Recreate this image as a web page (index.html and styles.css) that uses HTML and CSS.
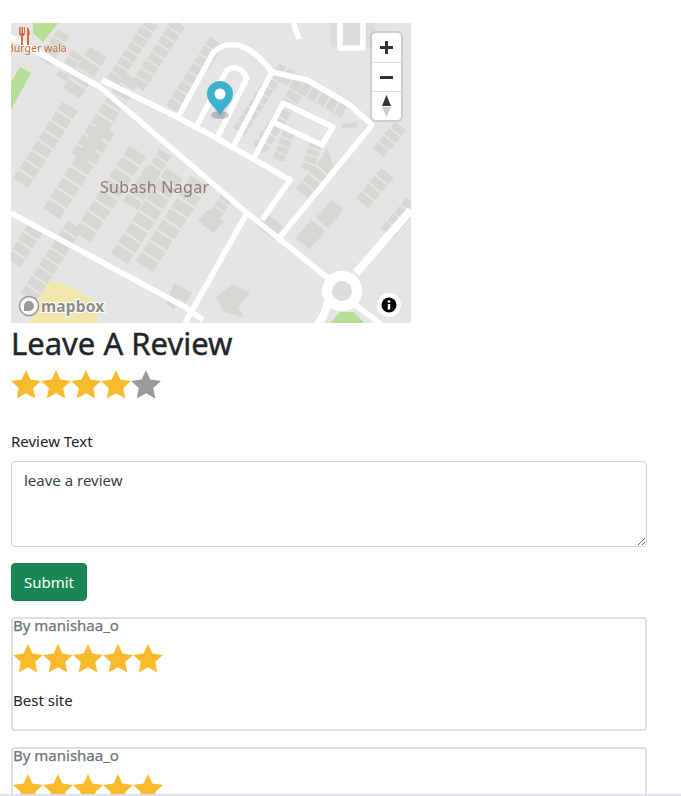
FILE: index.html
```html
<!DOCTYPE html>
<html lang="en">
<head>
    <meta charset="UTF-8">
    <meta name="viewport" content="width=device-width, initial-scale=1.0">
    <title>Leave A Review</title>
    <link rel="stylesheet" href="styles.css">
</head>
<body>
    <svg class="defs" width="0" height="0" aria-hidden="true">
        <defs>
            <polygon id="star" points="15,0 19.4,9.6 30,10.9 22.2,18.1 24.3,28.5 15,23.3 5.7,28.5 7.8,18.1 0,10.9 10.6,9.6"/>
            <g id="row4">
                <rect x="0" y="0" width="10.500" height="20"/><rect x="13" y="0" width="10.500" height="20"/>
                <rect x="26" y="0" width="10.500" height="20"/><rect x="39" y="0" width="10.500" height="20"/>
            </g>
            <g id="row8">
                <use href="#row4"/><use href="#row4" x="52"/>
            </g>
        </defs>
    </svg>

    <main class="container">
        <div class="map">
            <svg class="map-canvas" width="400" height="300" viewBox="0 0 400 300">
                <!-- parks -->
                <g class="park">
                    <polygon points="22,0 47,0 32,19 22,10"/>
                    <polygon points="0,59 9,44 20,50 0,87"/>
                    <polygon points="319,300 329,289 342,289 354,300"/>
                </g>
                <polygon class="sand" points="37,257 61,264 86,280 86,300 17,300"/>

                <!-- buildings -->
                <g class="buildings">
                    <use href="#row8" transform="translate(2,155) rotate(-57) scale(.9)"/>
                    <use href="#row4" transform="translate(28,35) rotate(-57) scale(.7)"/>
                    <use href="#row4" transform="translate(45,52) rotate(-57) scale(.6)"/>
                    <use href="#row8" transform="translate(32,185) rotate(-57)"/>
                    <use href="#row4" transform="translate(52,65) rotate(-57)"/>
                    <use href="#row8" transform="translate(63,208) rotate(-57)"/>
                    <use href="#row4" transform="translate(112,178) rotate(-57) scale(.85)"/>
                    <use href="#row8" transform="translate(100,230) rotate(-57)"/>
                    <use href="#row8" transform="translate(125,238) rotate(-57)"/>
                    <use href="#row8" transform="translate(60,130) rotate(-57) scale(.95)"/>
                    <use href="#row4" transform="translate(130,155) rotate(-57) scale(.7)"/>
                    <use href="#row8" transform="translate(96,55) rotate(-57) scale(.7)"/>
                    <use href="#row8" transform="translate(120,60) rotate(-57) scale(.75)"/>
                    <use href="#row8" transform="translate(155,82) rotate(-57) scale(.8)"/>
                    <use href="#row8" transform="translate(10,270) rotate(-57) scale(.85)"/>
                    <use href="#row4" transform="translate(-5,235) rotate(-57) scale(.85)"/>
                    <use href="#row8" transform="translate(222,105) rotate(-57) scale(.7)"/>
                    <use href="#row8" transform="translate(242,122) rotate(-57) scale(.75)"/>
                    <use href="#row4" transform="translate(195,195) rotate(-57) scale(.6)"/>
                    <use href="#row8" transform="translate(268,40) rotate(30) scale(.8)"/>
                    <use href="#row4" transform="translate(262,135) rotate(-70) scale(.6)"/>
                    <use href="#row4" transform="translate(290,145) rotate(-70) scale(.6)"/>
                    <use href="#row4" transform="translate(285,165) rotate(-50) scale(.8)"/>
                    <use href="#row4" transform="translate(345,175) rotate(-50) scale(.8)"/>
                    <use href="#row4" transform="translate(370,205) rotate(-50) scale(.8)"/>
                    <use href="#row4" transform="translate(362,125) rotate(-50) scale(.7)"/>
                    <rect x="0" y="0" width="22" height="16" transform="translate(255,190) rotate(38)"/>
                    <rect x="0" y="0" width="24" height="18" transform="translate(285,215) rotate(-50)"/>
                    <rect x="0" y="0" width="24" height="16" transform="translate(305,195) rotate(-50)"/>
                    <polygon points="312,133 316,123 324,148 310,146"/>
                    <rect x="330" y="100" width="16" height="5" transform="rotate(-8 338 102)"/>
                    <rect x="320" y="0" width="44" height="24" class="pale"/>
                    <path d="M155 280l8 -20l18 10l-6 10l-8 -5l-2 6l-2 6z"/>
                    <path d="M205 275l16 -14l18 9l-12 14l6 10l-20 -5z"/>
                    <rect x="190" y="190" width="20" height="16" transform="rotate(40 200 198)"/>
                </g>

                <!-- roads -->
                <g class="roads">
                    <polyline points="-4,12 89,64 236,190 317,255"/>
                    <polyline points="0,190 174,284 192,297"/>
                    <polyline points="236,190 174,300"/>
                    <polyline points="91,57 166,94 209,117 279,157 251,197"/>
                    <path d="M167 94 L202 30 Q212 20 223 22 Q240 22 261 49 L222 124"/>
                    <polyline points="261,49 296,57 339,82 361,102 269,214"/>
                    <path d="M186 102 L216 47 Q228 40 236 55 L206 115"/>
                    <polyline points="242,137 272,80 322,104 311,122 264,100"/>
                    <polyline points="282,-2 288,16"/>
                    <polyline points="329,-2 329,25 352,25 352,-2"/>
                    <polyline class="wide" points="345,250 400,187"/>
                    <polyline points="342,280 372,303"/>
                    <path class="wide" d="M318 272 Q316 290 306 303"/>
                    <circle class="ring" cx="331" cy="268" r="15"/>
                </g>

                <text class="label-place" x="89" y="170">Subash Nagar</text>
                <text class="label-poi" x="-4" y="29">Burger wala</text>
                <path class="label-icon" d="M8 4v6c0 2 1 3 2 3v9h2v-9c1 0 2-1 2-3V4h-1v6h-1V4h-1.500v6h-1V4z M16 4c2 1 3 4 3 8h-1v10h-2z"/>

                <!-- pin -->
                <ellipse class="pin-shadow" cx="209" cy="92" rx="9" ry="4"/>
                <path class="pin" d="M209 93 C204 83 196 80 196 71 A13 13 0 0 1 222 71 C222 80 214 83 209 93z"/>
                <circle class="pin-dot" cx="209" cy="71" r="5.500"/>
            </svg>

            <div class="map-controls">
                <button class="map-btn" type="button">
                    <svg width="15" height="15" viewBox="0 0 15 15"><path d="M6 1h3v5h5v3H9v5H6V9H1V6h5z"/></svg>
                </button>
                <button class="map-btn" type="button">
                    <svg width="15" height="15" viewBox="0 0 15 15"><rect x="1" y="6" width="13" height="3"/></svg>
                </button>
                <button class="map-btn" type="button">
                    <svg width="15" height="24" viewBox="0 0 15 24"><polygon points="7.500,1 12,12 3,12"/><polygon class="compass-low" points="3,13 12,13 7.500,23"/></svg>
                </button>
            </div>

            <div class="map-logo">
                <svg width="22" height="22" viewBox="0 0 22 22"><circle cx="11" cy="11" r="9.500"/><path class="logo-mark" d="M11 6a5 5 0 0 1 5 5 5 5 0 0 1-5 5H6v-5a5 5 0 0 1 5-5z"/></svg>
                <span class="logo-text">mapbox</span>
            </div>
            <div class="map-info">
                <svg width="16" height="16" viewBox="0 0 16 16"><circle cx="8" cy="8" r="7.500"/><rect class="info-i" x="6.800" y="7" width="2.400" height="5.500"/><circle class="info-i" cx="8" cy="4.600" r="1.400"/></svg>
            </div>
        </div>

        <h2 class="review-title">Leave A Review</h2>
        <div class="stars">
            <svg class="star" viewBox="0 0 30 30"><use href="#star"/></svg>
            <svg class="star" viewBox="0 0 30 30"><use href="#star"/></svg>
            <svg class="star" viewBox="0 0 30 30"><use href="#star"/></svg>
            <svg class="star" viewBox="0 0 30 30"><use href="#star"/></svg>
            <svg class="star star-off" viewBox="0 0 30 30"><use href="#star"/></svg>
        </div>

        <form class="review-form">
            <label class="form-label" for="body">Review Text</label>
            <textarea class="form-control" id="body" placeholder="leave a review"></textarea>
            <button class="btn-submit" type="button">Submit</button>
        </form>

        <div class="card">
            <h6 class="card-subtitle">By manishaa_o</h6>
            <div class="stars stars-card">
                <svg class="star" viewBox="0 0 30 30"><use href="#star"/></svg>
                <svg class="star" viewBox="0 0 30 30"><use href="#star"/></svg>
                <svg class="star" viewBox="0 0 30 30"><use href="#star"/></svg>
                <svg class="star" viewBox="0 0 30 30"><use href="#star"/></svg>
                <svg class="star" viewBox="0 0 30 30"><use href="#star"/></svg>
            </div>
            <p class="card-text">Best site</p>
        </div>

        <div class="card">
            <h6 class="card-subtitle">By manishaa_o</h6>
            <div class="stars stars-card">
                <svg class="star" viewBox="0 0 30 30"><use href="#star"/></svg>
                <svg class="star" viewBox="0 0 30 30"><use href="#star"/></svg>
                <svg class="star" viewBox="0 0 30 30"><use href="#star"/></svg>
                <svg class="star" viewBox="0 0 30 30"><use href="#star"/></svg>
                <svg class="star" viewBox="0 0 30 30"><use href="#star"/></svg>
            </div>
        </div>
    </main>
    <div class="window-edge"></div>
</body>
</html>
```

FILE: styles.css
```css
html, body {
    margin: 0;
    padding: 0;
    height: 796px;
    overflow: hidden;
    background: #fff;
    color: #212529;
    font-family: "Noto Sans", "Open Sans", sans-serif;
    font-size: 15px;
}
.defs {
    display: block;
    height: 0;
}
.container {
    box-sizing: border-box;
    width: 636px;
    height: 796px;
    overflow: hidden;
    margin-left: 11px;
    padding-top: 23px;
}

/* map */
.map {
    position: relative;
    width: 400px;
    height: 300px;
    overflow: hidden;
    background: #e6e5e3;
}
.map-canvas {
    display: block;
    filter: blur(.3px);
}
.park { fill: #b5de96; }
.sand { fill: #f0e6ae; }
.buildings { fill: #d7d7d4; }
.buildings .pale { fill: #dcdcda; }
.roads {
    fill: none;
    stroke: #fff;
    stroke-width: 5.500;
    stroke-linejoin: round;
}
.roads .wide { stroke-width: 8; }
.roads .ring {
    fill: #dedddb;
    stroke-width: 10;
}
.label-place {
    fill: #8a7d72;
    font-size: 16px;
    letter-spacing: .3px;
}
.label-poi {
    fill: #c8703c;
    font-size: 10.500px;
}
.label-icon { fill: #c8703c; }
.pin { fill: #3fb1ce; }
.pin-dot { fill: #fff; }
.pin-shadow { fill: rgba(0, 0, 0, .2); }

.map-controls {
    position: absolute;
    top: 10px;
    right: 10px;
    width: 29px;
    background: #fff;
    border-radius: 4px;
    box-shadow: 0 0 0 2px rgba(0, 0, 0, .1);
    display: flex;
    flex-direction: column;
}
.map-btn {
    width: 29px;
    height: 29px;
    padding: 0;
    background: none;
    border: none;
    border-top: 1px solid #ddd;
    display: flex;
    align-items: center;
    justify-content: center;
}
.map-btn:first-child { border-top: none; }
.map-btn svg { fill: #333; }
.map-btn .compass-low { fill: #ccc; }

.map-logo {
    position: absolute;
    left: 7px;
    bottom: 6px;
    display: flex;
    align-items: center;
    gap: 1px;
}
.map-logo svg {
    fill: rgba(255, 255, 255, .9);
    stroke: #999;
    stroke-width: 1.500;
}
.map-logo .logo-mark {
    fill: #999;
    stroke: none;
}
.logo-text {
    color: #8c8c8c;
    font-size: 15.500px;
    font-weight: 700;
    letter-spacing: .2px;
    -webkit-text-stroke: 2px #fff;
    paint-order: stroke fill;
}
.map-info {
    position: absolute;
    right: 10px;
    bottom: 6px;
    width: 24px;
    height: 24px;
    border-radius: 50%;
    background: #fff;
    display: flex;
    align-items: center;
    justify-content: center;
}
.map-info svg { fill: #000; }
.map-info .info-i { fill: #fff; }

/* review form */
.review-title {
    margin: 0 0 7px;
    font-size: 31px;
    font-weight: 400;
    line-height: 40px;
    -webkit-text-stroke: .4px #212529;
}
.stars {
    display: flex;
    height: 30px;
    margin-bottom: 29px;
}
.star {
    width: 30px;
    height: 30px;
    fill: #f7bb2c;
}
.star-off { fill: #9a9a9a; }
.form-label {
    display: block;
    line-height: 24px;
    margin-bottom: 8px;
}
.form-control {
    display: block;
    box-sizing: border-box;
    width: 100%;
    height: 86px;
    padding: 6px 12px;
    border: 1px solid #ced4da;
    border-radius: 4px;
    background: #fff;
    color: #212529;
    font-family: inherit;
    font-size: 15px;
    line-height: 24px;
    margin-bottom: 16px;
}
.form-control::placeholder {
    color: #3c4247;
    opacity: 1;
}
.btn-submit {
    display: block;
    height: 38px;
    width: 76px;
    padding: 0;
    border: 1px solid #198754;
    border-radius: 4px;
    background: #198754;
    color: #fff;
    font-family: inherit;
    font-size: 15px;
    margin-bottom: 16px;
}

/* review cards */
.card {
    box-sizing: border-box;
    height: 114px;
    margin-bottom: 16px;
    border: 2px solid #dfdfdf;
    border-radius: 4px;
}
.card-subtitle {
    margin: 0 0 13px;
    color: #6c757d;
    font-size: 15px;
    font-weight: 400;
    line-height: 12px;
    -webkit-text-stroke: .25px #6c757d;
}
.stars-card {
    margin-bottom: 14px;
}
.card-text {
    margin: 0;
    line-height: 24px;
}

.window-edge {
    position: fixed;
    left: 0;
    right: 0;
    bottom: 0;
    height: 2px;
    background: #dfe1ee;
}
```
